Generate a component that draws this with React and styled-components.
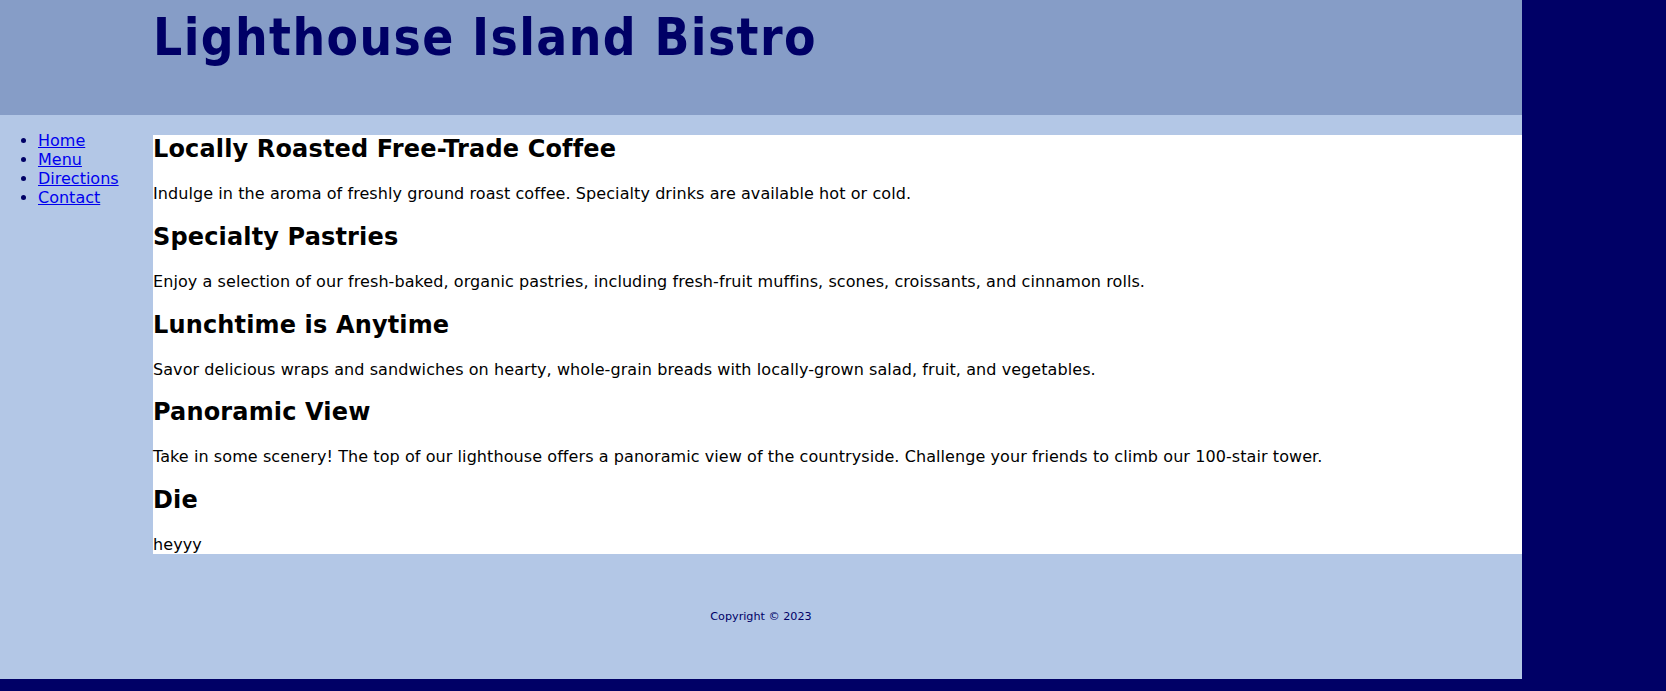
import React from 'react';
import styled, { createGlobalStyle } from 'styled-components';

const GlobalStyle = createGlobalStyle`
  html, body {
    margin: 0;
    padding: 0;
  }
  body {
    background-color: #000066;
    font-family: "DejaVu Sans", Verdana, sans-serif;
    line-height: 1.215;
  }
`;

const Wrapper = styled.div`
  width: 1522px;
  margin-bottom: 12px;
  background-color: #b3c7e6;
`;

const Header = styled.header`
  height: 115px;
  box-sizing: border-box;
  padding: 12px 0 0 153px;
  background-color: #869dc7;
  color: #000066;
`;

const Title = styled.h1`
  margin: 0;
  font-family: "DejaVu Sans Condensed", "DejaVu Sans", Tahoma, sans-serif;
  font-size: 51px;
  font-weight: bold;
  letter-spacing: 1.4px;
  line-height: 1;
`;

const Row = styled.div`
  display: flex;
  align-items: flex-start;
`;

const Nav = styled.nav`
  flex: 0 0 153px;
  color: #000066;
`;

const NavList = styled.ul`
  margin: 16px 0;
  padding-left: 38px;
  font-size: 16px;
  line-height: 19px;
`;

const NavLink = styled.a`
  color: #0000ee;
  text-decoration: underline;
`;

const Main = styled.main`
  flex: 1;
  margin-top: 20px;
  background-color: #ffffff;
  color: #000000;
`;

const Heading = styled.h2`
  margin: 19.92px 0;
  font-size: 24px;
  font-weight: bold;
  line-height: 29px;
  letter-spacing: 0.15px;
  &:first-child {
    margin-top: 0;
  }
`;

const Para = styled.p`
  margin: 16px 0;
  font-size: 16px;
  line-height: 19px;
  letter-spacing: 0.08px;
  &:last-child {
    margin-bottom: 0;
  }
`;

const Footer = styled.footer`
  padding: 56px 0 55px;
  text-align: center;
  font-size: 11.2px;
  color: #000066;
`;

const links = ['Home', 'Menu', 'Directions', 'Contact'];

const sections = [
  {
    title: 'Locally Roasted Free-Trade Coffee',
    text: 'Indulge in the aroma of freshly ground roast coffee. Specialty drinks are available hot or cold.',
  },
  {
    title: 'Specialty Pastries',
    text: 'Enjoy a selection of our fresh-baked, organic pastries, including fresh-fruit muffins, scones, croissants, and cinnamon rolls.',
  },
  {
    title: 'Lunchtime is Anytime',
    text: 'Savor delicious wraps and sandwiches on hearty, whole-grain breads with locally-grown salad, fruit, and vegetables.',
  },
  {
    title: 'Panoramic View',
    text: 'Take in some scenery! The top of our lighthouse offers a panoramic view of the countryside. Challenge your friends to climb our 100-stair tower.',
  },
  { title: 'Die', text: 'heyyy' },
];

const App = () => (
  <>
    <GlobalStyle />
    <Wrapper>
      <Header>
        <Title>Lighthouse Island Bistro</Title>
      </Header>
      <Row>
        <Nav>
          <NavList>
            {links.map((l) => (
              <li key={l}>
                <NavLink href="#">{l}</NavLink>
              </li>
            ))}
          </NavList>
        </Nav>
        <Main>
          {sections.map((s) => (
            <React.Fragment key={s.title}>
              <Heading>{s.title}</Heading>
              <Para>{s.text}</Para>
            </React.Fragment>
          ))}
        </Main>
      </Row>
      <Footer>Copyright © 2023</Footer>
    </Wrapper>
  </>
);

export default App;
